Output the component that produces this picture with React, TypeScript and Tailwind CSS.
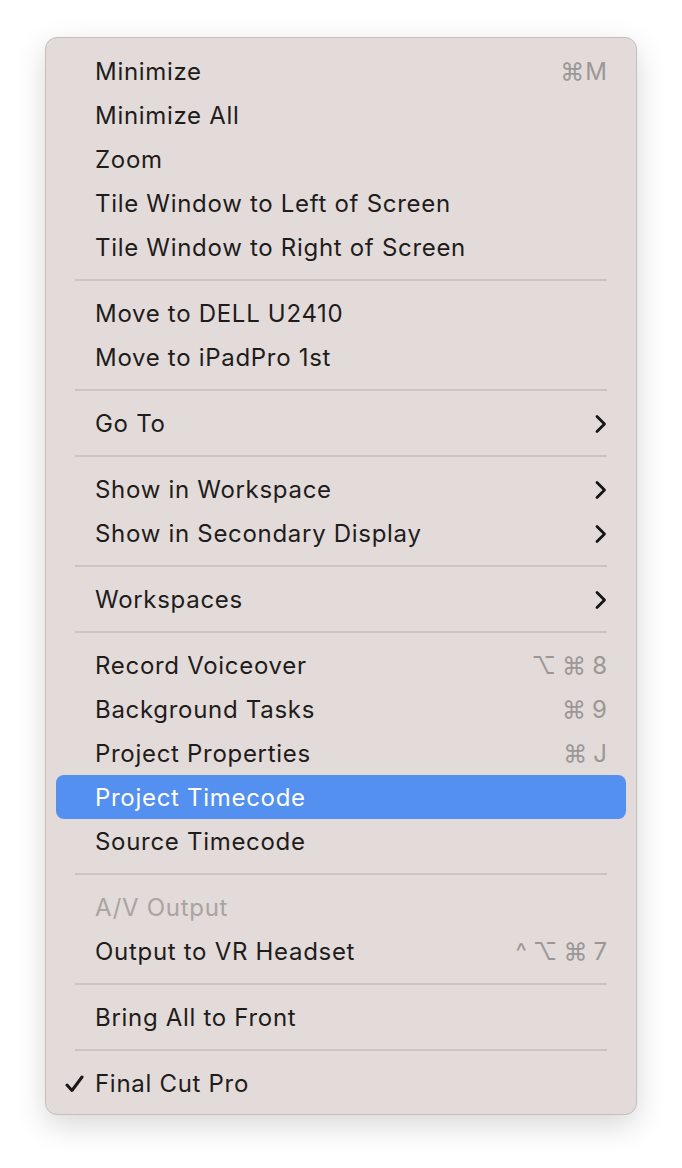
type Item =
  | { kind: 'sep' }
  | { kind: 'item'; label: string; shortcut?: string; submenu?: boolean; disabled?: boolean; active?: boolean; checked?: boolean };

const items: Item[] = [
  { kind: 'item', label: 'Minimize', shortcut: '⌘M' },
  { kind: 'item', label: 'Minimize All' },
  { kind: 'item', label: 'Zoom' },
  { kind: 'item', label: 'Tile Window to Left of Screen' },
  { kind: 'item', label: 'Tile Window to Right of Screen' },
  { kind: 'sep' },
  { kind: 'item', label: 'Move to DELL U2410' },
  { kind: 'item', label: 'Move to iPadPro 1st' },
  { kind: 'sep' },
  { kind: 'item', label: 'Go To', submenu: true },
  { kind: 'sep' },
  { kind: 'item', label: 'Show in Workspace', submenu: true },
  { kind: 'item', label: 'Show in Secondary Display', submenu: true },
  { kind: 'sep' },
  { kind: 'item', label: 'Workspaces', submenu: true },
  { kind: 'sep' },
  { kind: 'item', label: 'Record Voiceover', shortcut: '⌥⌘8' },
  { kind: 'item', label: 'Background Tasks', shortcut: '⌘9' },
  { kind: 'item', label: 'Project Properties', shortcut: '⌘J' },
  { kind: 'item', label: 'Project Timecode', active: true },
  { kind: 'item', label: 'Source Timecode' },
  { kind: 'sep' },
  { kind: 'item', label: 'A/V Output', disabled: true },
  { kind: 'item', label: 'Output to VR Headset', shortcut: '^⌥⌘7' },
  { kind: 'sep' },
  { kind: 'item', label: 'Bring All to Front' },
  { kind: 'sep' },
  { kind: 'item', label: 'Final Cut Pro', checked: true },
];

function Shortcut({ keys }: { keys: string }) {
  const tight = keys === '⌘M';
  return (
    <span className={`flex items-center tracking-normal text-[#9d9696] ${tight ? 'gap-[1px]' : 'gap-[6px]'}`}>
      {Array.from(keys).map((k, i) => (
        <span key={i} className="inline-block text-center">{k}</span>
      ))}
    </span>
  );
}

function Chevron() {
  return (
    <svg width="14" height="20" viewBox="0 0 14 20" fill="none" className="mr-[-1px]">
      <path d="M3 2.5 L10.5 10 L3 17.5" stroke="#171414" strokeWidth="2.8" strokeLinecap="round" strokeLinejoin="round" />
    </svg>
  );
}

export default function App() {
  return (
    <div className="min-h-screen w-full bg-white pt-[37px] pl-[45px]" style={{ fontFamily: 'Inter, "Noto Sans", sans-serif' }}>
      <div className="w-[592px] rounded-[12px] border border-[#c4bebd] bg-[#e2dbd9] pt-[11px] pb-[9px] shadow-[0_10px_30px_rgba(0,0,0,0.16)]">
        {items.map((it, i) =>
          it.kind === 'sep' ? (
            <div key={i} className="flex h-[22px] items-center px-[29px]">
              <div className="h-[2px] w-full bg-[#cbc4c2]" />
            </div>
          ) : (
            <div key={i} className="px-[10px]">
              <div
                className={`relative flex h-[44px] items-center justify-between rounded-[8px] pl-[39px] pr-[19px] pt-[2px] text-[24px] leading-none tracking-[0.7px] ${
                  it.active ? 'bg-[#5390f0] text-white' : it.disabled ? 'text-[#aaa3a2]' : 'text-[#1f1c1c]'
                }`}
              >
                {it.checked && (
                  <svg className="absolute left-[9px] top-[14px]" width="19" height="18" viewBox="0 0 19 18" fill="none">
                    <path d="M2 10 L7 15.5 L17 2" stroke="#1a1818" strokeWidth="3" strokeLinecap="round" strokeLinejoin="round" />
                  </svg>
                )}
                <span>{it.label}</span>
                {it.shortcut && <Shortcut keys={it.shortcut} />}
                {it.submenu && <Chevron />}
              </div>
            </div>
          )
        )}
      </div>
    </div>
  );
}
